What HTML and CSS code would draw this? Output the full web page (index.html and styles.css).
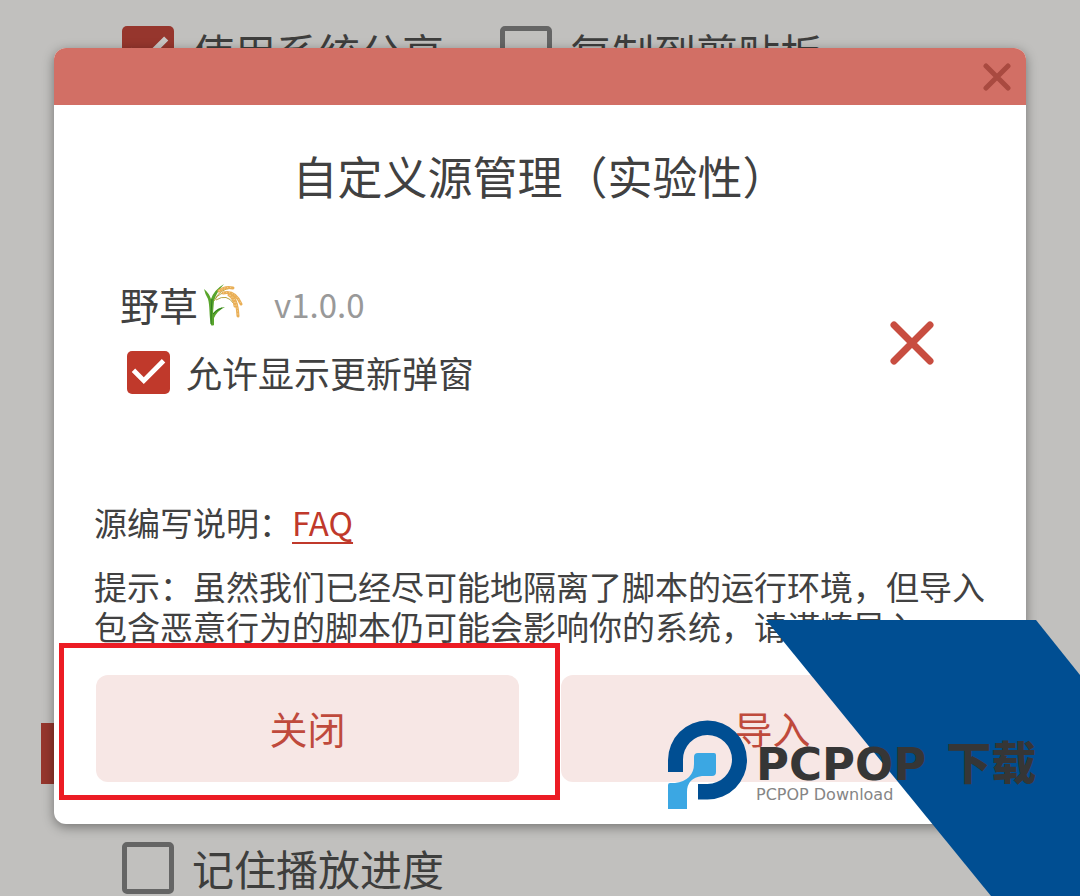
FILE: index.html
```html
<!DOCTYPE html>
<html lang="zh-CN">
<head>
  <meta charset="UTF-8" />
  <meta name="viewport" content="width=device-width, initial-scale=1" />
  <title>自定义源管理</title>
  <link rel="stylesheet" href="styles.css">
</head>
<body>
<main class="settings">
  <div class="option-row">
    <label class="option"><input type="checkbox" class="check" checked>使用系统分享</label>
    <label class="option"><input type="checkbox" class="check">复制到剪贴板</label>
  </div>
  <div class="section-bar"></div>
  <div class="option-row">
    <label class="option"><input type="checkbox" class="check">记住播放进度</label>
  </div>
</main>

<div class="mask">
  <div class="dialog" role="dialog" aria-labelledby="dialog-title">
    <header class="dialog-header">
      <button class="icon-btn close-btn" aria-label="关闭窗口">
        <svg viewBox="0 0 28 28"><path d="M3 3L25 25M25 3L3 25" /></svg>
      </button>
    </header>
    <h1 class="dialog-title" id="dialog-title">自定义源管理（实验性）</h1>

    <div class="source">
      <div class="source-info">
        <div class="source-name">
          <span>野草</span>
          <svg class="rice" viewBox="0 0 40 44">
            <path d="M7 43C5 34 6 24 4 17Q1 12 0 7Q5 11 7 17Q10 8 20 2Q12 11 10 19L9 31Q14 25 21 25Q13 29 10 36V43Q8 44 7 43Z" fill="#59a52c" />
            <path d="M7 42Q7 27 8 17M9 32Q12 28 18 26" fill="none" stroke="#2f7d22" />
            <path d="M10 19Q16 8 26 12Q34 17 34 31M11 17Q16 7 28 6M12 18Q23 11 30 22" fill="none" stroke="#b5a443" />
            <path d="M15 9Q21 4 29 6M19 11Q31 8 37 22M26 13Q33 16 34 34M25 13Q30 16 31 24" fill="none" stroke="#e9ae55" stroke-width="3" stroke-linecap="round" />
            <path d="M15 9Q21 4 29 6M19 11Q31 8 37 22M26 13Q33 16 34 34M25 13Q30 16 31 24" fill="none" stroke="#f9dca4" stroke-dasharray="1 2" />
          </svg>
          <span class="version">v1.0.0</span>
        </div>
        <label class="source-option"><input type="checkbox" class="check check-small" checked>允许显示更新弹窗</label>
      </div>
      <button class="icon-btn remove-btn" aria-label="移除">
        <svg viewBox="0 0 44 44"><path d="M4 4L40 40M40 4L4 40" /></svg>
      </button>
    </div>

    <div class="notes">
      <p>源编写说明：<a href="#faq">FAQ</a></p>
      <p>提示：虽然我们已经尽可能地隔离了脚本的运行环境，但导入包含恶意行为的脚本仍可能会影响你的系统，请谨慎导入</p>
    </div>

    <footer class="actions">
      <div class="marked">
        <button class="btn">关闭</button>
      </div>
      <button class="btn">导入</button>
    </footer>
  </div>
</div>

<div class="watermark">
  <svg class="watermark-shape" viewBox="0 0 420 276">
    <path d="M106 0H376L420 55V276H331Z" fill="#004e92" />
  </svg>
  <div class="brand">
    <svg class="brand-logo" viewBox="668 720 80 90">
      <path d="M668 772V760A39.500 39.500 0 1 1 707.500 799.500H698V784H707.500A24.500 24.500 0 1 0 683 760V772Z" fill="#004e92" />
      <path d="M668 785Q668 783 670 783H675Q684 782 689 777Q694 772 694 764V757Q694 753 698 753H714Q716 753 716 755V772Q716 776 712 776H702Q687 778 687 792V809H668Z" fill="#3ba7e3" />
    </svg>
    <div class="brand-text">
      <div class="brand-name">PCPOP<span>下载</span></div>
      <div class="brand-sub">PCPOP Download</div>
    </div>
  </div>
</div>
</body>
</html>
```
FILE: styles.css
```css
* {
  box-sizing: border-box;
}
body {
  margin: 0;
  position: relative;
  min-height: 100vh;
  overflow: hidden;
  background: #c1c0be;
  color: #414141;
  font-family: "Noto Sans CJK SC", "Noto Sans", sans-serif;
}
button {
  font-family: inherit;
  border: none;
  cursor: pointer;
}

/* settings page under the dialog */
.settings {
  display: flex;
  flex-direction: column;
  min-height: 100vh;
  padding: 26px 0 2px;
  background: #c1c0be;
}
.option-row {
  display: flex;
  gap: 56px;
  padding-left: 122px;
}
.option {
  display: flex;
  align-items: center;
  gap: 18px;
  height: 52px;
  font-size: 42px;
  line-height: 52px;
  color: #3e3e3d;
}
.section-bar {
  width: 24px;
  height: 61px;
  margin: auto 0 58px 41px;
  background: #96362d;
}
.check {
  appearance: none;
  flex: none;
  width: 52px;
  height: 52px;
  margin: 0;
  border: 5px solid #656565;
  border-radius: 5px;
}
.check:checked {
  border: none;
  background: #96362d;
}
.check:checked::after {
  content: "";
  display: block;
  height: 100%;
  background: #c8c5c3;
  clip-path: polygon(39% 78%, 11% 50%, 19% 42%, 39% 62%, 81% 20%, 89% 28%);
}
.check-small {
  width: 43px;
  height: 43px;
}
.check-small:checked {
  background: #c0392b;
}
.check-small:checked::after {
  background: #fff;
}

/* dialog */
.mask {
  position: absolute;
  inset: 0;
  display: flex;
  justify-content: center;
  align-items: flex-start;
  padding-top: 48px;
}
.dialog {
  width: 90%;
  background: #fff;
  border-radius: 12px;
  box-shadow: 0 3px 12px rgba(0, 0, 0, 0.4);
}
.dialog-header {
  display: flex;
  justify-content: flex-end;
  align-items: center;
  height: 57px;
  padding-right: 15px;
  background: #d26f65;
  border-radius: 12px 12px 0 0;
}
.icon-btn {
  display: flex;
  padding: 0;
  background: none;
}
.icon-btn svg {
  width: 100%;
  fill: none;
  stroke: currentColor;
  stroke-linecap: round;
}
.close-btn {
  width: 28px;
  color: #a94a40;
  stroke-width: 5;
}
.remove-btn {
  width: 44px;
  margin-top: 10px;
  color: #c84d40;
  stroke-width: 7;
}
.dialog-title {
  margin: 41px 0 68px;
  font-size: 45px;
  font-weight: 400;
  line-height: 60px;
  text-align: center;
}
.source {
  display: flex;
  justify-content: space-between;
  align-items: center;
  padding: 0 92px 0 66px;
}
.source-name {
  display: flex;
  align-items: center;
  font-size: 39px;
  line-height: 60px;
}
.rice {
  width: 40px;
  height: 44px;
  margin-left: 6px;
}
.version {
  margin-left: 30px;
  font-size: 33px;
  color: #999;
}
.source-option {
  display: flex;
  align-items: center;
  gap: 16px;
  margin-top: 8px;
  padding-left: 7px;
  font-size: 36px;
  line-height: 60px;
}
.notes {
  padding: 100px 40px 29px;
  font-size: 33px;
  line-height: 40px;
}
.notes p {
  margin: 0 0 24px;
}
.notes p:last-child {
  margin: 0;
}
.notes a {
  color: #c0392b;
  text-decoration: underline 2px;
  text-underline-offset: 6px;
  text-decoration-skip-ink: none;
}
.actions {
  display: grid;
  grid-template-columns: 1fr 1fr;
  gap: 42px;
  padding: 0 42px 42px;
}
.btn {
  width: 100%;
  height: 107px;
  padding-bottom: 4px;
  border-radius: 12px;
  background: #f7e7e5;
  color: #bf4a3c;
  font-size: 38px;
}
.marked {
  position: relative;
}
.marked::after {
  content: "";
  position: absolute;
  inset: -32px -41px -18px -37px;
  border: 5px solid #ec1c24;
  pointer-events: none;
}

/* watermark in the corner, over everything */
.watermark {
  position: absolute;
  right: 0;
  bottom: 0;
  width: 420px;
  height: 276px;
  padding: 100px 0 0 8px;
  pointer-events: none;
}
.watermark-shape {
  position: absolute;
  inset: 0;
}
.brand {
  position: relative;
  display: flex;
  gap: 8px;
}
.brand-logo {
  width: 80px;
  height: 90px;
}
.brand-text {
  padding-top: 28px;
}
.brand-name {
  display: flex;
  align-items: center;
  gap: 20px;
  height: 34px;
  font: 700 45px/34px "DejaVu Sans", sans-serif;
  color: #363636;
}
.brand-name span {
  padding-bottom: 8px;
  font-family: "Noto Sans CJK SC", sans-serif;
  font-weight: 900;
}
.brand-sub {
  margin-top: 3px;
  font: 16px/20px "DejaVu Sans", sans-serif;
  color: #858585;
}
```
